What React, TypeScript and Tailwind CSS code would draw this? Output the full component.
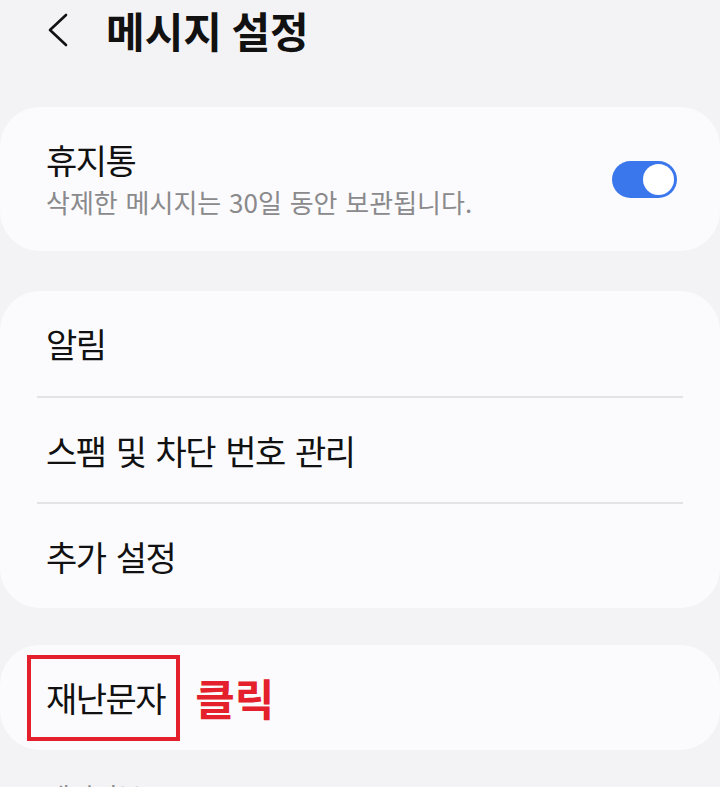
export default function App() {
  const font = { fontFamily: '"Noto Sans CJK KR", "Noto Sans", sans-serif' };

  return (
    <div className="min-h-[787px] w-[720px] overflow-hidden bg-[#f3f3f5] text-[#111]" style={font}>
      {/* header */}
      <div className="flex h-[60px] items-center">
        <svg className="ml-[46px] h-[36px] w-[24px]" viewBox="0 0 24 36" fill="none">
          <path d="M20 3 L4 18 L20 33" stroke="#111" strokeWidth="2.6" strokeLinecap="round" strokeLinejoin="round" />
        </svg>
        <h1 className="ml-[36px] text-[42px] font-bold leading-none">메시지 설정</h1>
      </div>

      {/* trash */}
      <div className="mt-[47px] flex h-[144px] items-center justify-between rounded-[40px] bg-[#fbfbfd] pl-[46px] pr-[43px]">
        <div className="flex flex-col">
          <span className="text-[34px] leading-[40px] tracking-[-1.5px]">휴지통</span>
          <span className="mt-[6px] text-[26px] leading-[32px] text-[#8a8a8c] [word-spacing:2px]">
            삭제한 메시지는 30일 동안 보관됩니다.
          </span>
        </div>
        <div className="flex h-[37px] w-[65px] items-center justify-end rounded-full bg-[#3b77ec] pr-[3px]">
          <div className="h-[31px] w-[31px] rounded-full bg-white" />
        </div>
      </div>

      {/* menu group */}
      <div className="mt-[40px] flex flex-col rounded-[40px] bg-[#fbfbfd]">
        <div className="flex h-[105px] items-center pl-[46px] text-[34px] tracking-[-1.5px] [word-spacing:4px]">알림</div>
        <div className="mx-[37px] h-[2px] bg-[#e3e3e5]" />
        <div className="flex h-[104px] items-center pl-[46px] text-[34px] tracking-[-1.5px] [word-spacing:4px]">
          스팸 및 차단 번호 관리
        </div>
        <div className="mx-[37px] h-[2px] bg-[#e3e3e5]" />
        <div className="flex h-[104px] items-center pl-[46px] text-[34px] tracking-[-1.5px] [word-spacing:4px]">
          추가 설정
        </div>
      </div>

      {/* emergency */}
      <div className="mt-[37px] flex h-[105px] items-center rounded-[40px] bg-[#fbfbfd] pl-[27px]">
        <div className="flex h-[86px] items-center border-4 border-[#e3202b] pl-[15px] pr-[11px] text-[34px] tracking-[-1.5px]">
          재난문자
        </div>
        <span className="ml-[15px] text-[43px] font-bold text-[#e3202b]">클릭</span>
      </div>

      <div className="mt-[30px] pl-[46px] text-[26px] leading-[32px] text-[#8a8a8c]">개인정보</div>
    </div>
  );
}
